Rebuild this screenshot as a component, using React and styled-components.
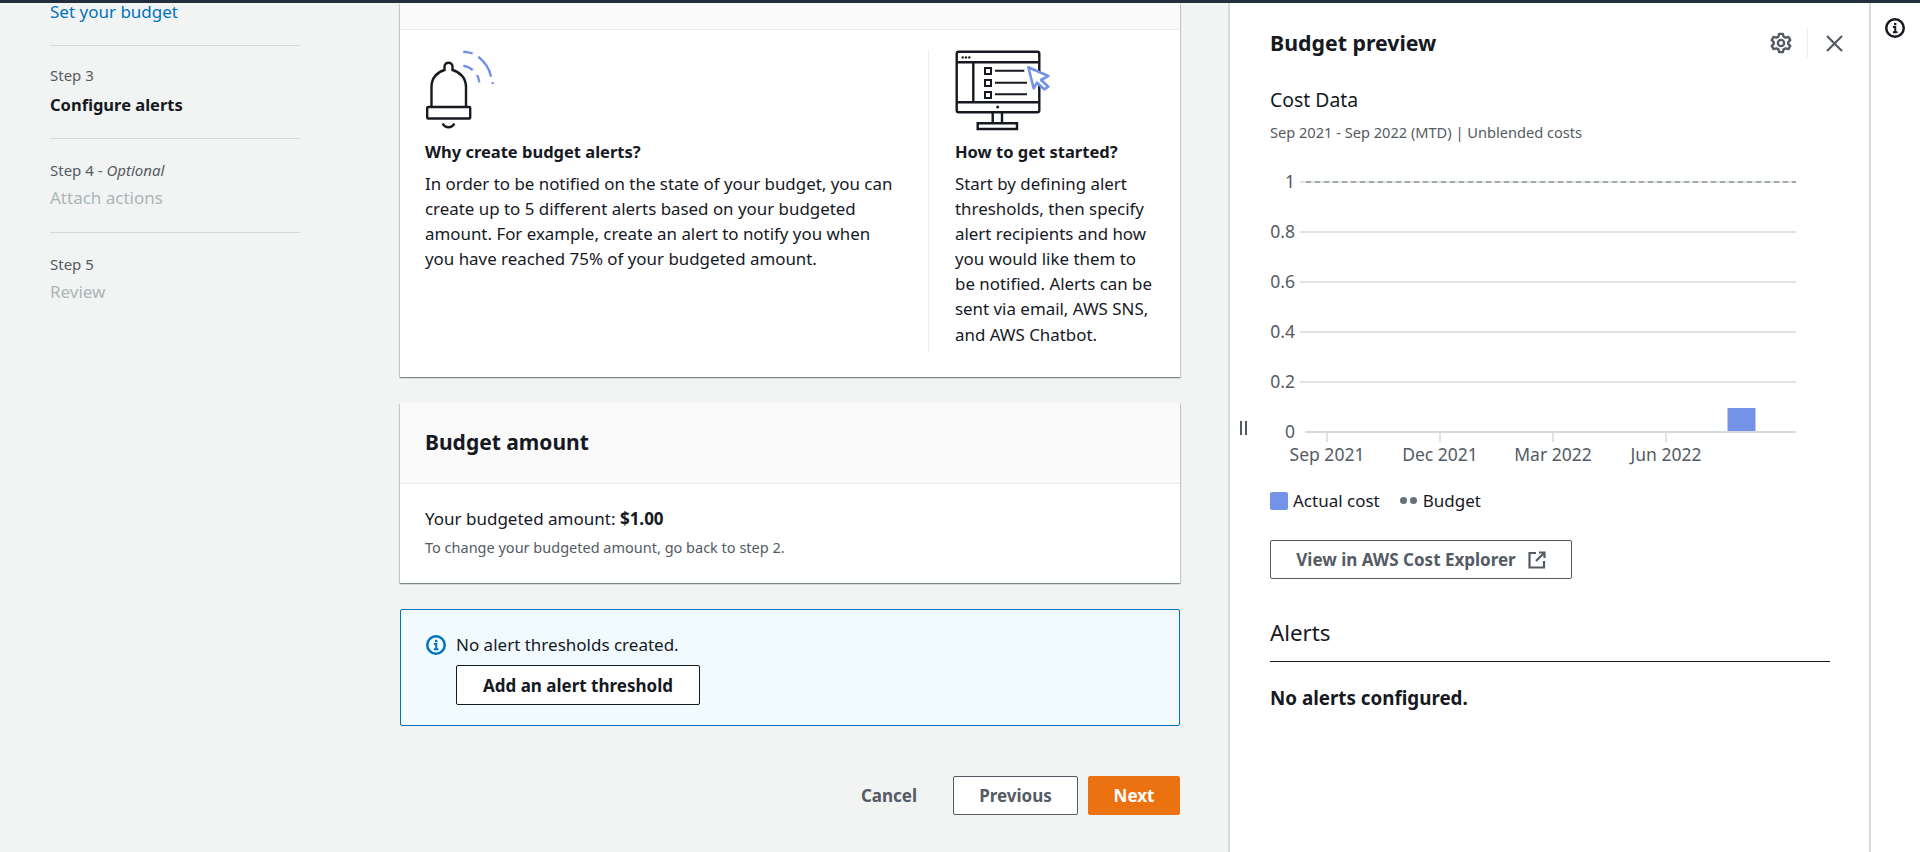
import React from "react";
import styled, { createGlobalStyle } from "styled-components";

const GlobalStyle = createGlobalStyle`
  html, body {
    margin: 0;
    padding: 0;
    height: 100%;
    overflow: hidden;
  }
  body {
    font-family: "Noto Sans", "Open Sans", sans-serif;
    font-size: 17px;
    line-height: 25px;
    color: #16191f;
    background: #f2f3f3;
  }
  * { box-sizing: border-box; }
`;

const Page = styled.div`
  display: flex;
  flex-direction: column;
  height: 852px;
  overflow: hidden;
`;
const TopEdge = styled.div`
  height: 3px;
  flex: none;
  background: #232f3e;
`;
const Body = styled.div`
  flex: 1;
  display: flex;
  min-height: 0;
`;
const Content = styled.div`
  width: 1228px;
  flex: none;
  display: flex;
`;

const Steps = styled.nav`
  width: 250px;
  margin-left: 50px;
  flex: none;
`;
const Step = styled.div`
  height: ${(p) => p.$height || 94}px;
  padding-top: ${(p) => p.$top ?? 21}px;
  border-bottom: ${(p) => (p.$last ? "none" : "1px solid #d5dbdb")};
`;
const StepLabel = styled.div`
  font-size: 15px;
  line-height: 20px;
  color: #545b64;
  em { font-style: italic; }
`;
const StepName = styled.div`
  margin-top: ${(p) => (p.$active ? 7 : 5)}px;
  font-size: ${(p) => (p.$active ? 16.5 : 17)}px;
  line-height: 25px;
  font-weight: ${(p) => (p.$active ? 700 : 400)};
  color: ${(p) => (p.$active ? "#16191f" : "#aab7b8")};
`;
const StepLink = styled.a`
  display: block;
  font-size: 17px;
  line-height: 18px;
  color: #0073bb;
`;

const Main = styled.main`
  width: 780px;
  margin-left: 100px;
  flex: none;
  display: flex;
  flex-direction: column;
`;
const Card = styled.section`
  background: #fff;
  box-shadow: 0 1px 1px 0 rgba(0, 28, 36, 0.3), 1px 1px 1px 0 rgba(0, 28, 36, 0.15),
    -1px 1px 1px 0 rgba(0, 28, 36, 0.15);
  margin-bottom: 26px;
`;
const CardStub = styled.div`
  height: 27px;
  background: #fafafa;
  border-bottom: 1px solid #eaeded;
`;
const IntroBody = styled.div`
  display: flex;
  height: 347px;
  padding: 20px 0 25px 25px;
`;
const IntroLeft = styled.div`
  width: 503px;
  flex: none;
`;
const IntroRight = styled.div`
  flex: 1;
  border-left: 1px solid #eaeded;
  padding-left: 26px;
`;
const Art = styled.svg`
  display: block;
`;
const IntroTitle = styled.div`
  font-weight: 700;
  font-size: 16.5px;
  line-height: 25px;
  margin-top: 5px;
`;
const IntroText = styled.p`
  margin: 7px 0 0;
  font-size: 16.9px;
  line-height: 25.1px;
  white-space: nowrap;
`;

const CardHeader = styled.header`
  height: 81px;
  padding: 0 0 2px 25px;
  display: flex;
  align-items: center;
  background: #fafafa;
  border-bottom: 1px solid #eaeded;
  font-size: 21px;
  font-weight: 700;
`;
const CardBody = styled.div`
  height: 99px;
  padding: 22px 25px 0;
  font-size: 17px;
  b { font-weight: 700; }
`;
const Hint = styled.div`
  font-size: 14.5px;
  line-height: 20px;
  margin-top: 6px;
  color: #545b64;
`;

const Flash = styled.div`
  height: 117px;
  background: #f1faff;
  border: 1px solid #0073bb;
  border-radius: 2px;
  padding: 25px 25px 0;
  display: flex;
  gap: 10px;
`;
const FlashIcon = styled.svg`
  flex: none;
`;
const FlashText = styled.div`
  font-size: 17px;
  line-height: 20px;
`;
const Button = styled.button`
  display: inline-flex;
  align-items: center;
  justify-content: center;
  gap: 12px;
  width: ${(p) => p.$width}px;
  height: ${(p) => p.$height || 39}px;
  padding: 0;
  border-radius: 2px;
  border: 1px solid ${(p) => p.$line || "#545b64"};
  background: ${(p) => p.$bg || "#fff"};
  color: ${(p) => p.$color || "#545b64"};
  font-family: inherit;
  font-size: 17px;
  font-weight: 700;
`;
const AddButton = styled(Button)`
  display: flex;
  margin-top: 10px;
  background: #fff;
  border-color: #16191f;
  color: #16191f;
`;
const Actions = styled.div`
  display: flex;
  justify-content: flex-end;
  align-items: center;
  margin-top: 50px;
  gap: 10px;
`;
const CancelButton = styled(Button)`
  border: none;
  background: transparent;
  margin-right: 19px;
`;

const Preview = styled.aside`
  position: relative;
  width: 643px;
  flex: none;
  background: #fff;
  border-left: 2px solid #d5dbdb;
  border-right: 2px solid #d5dbdb;
  padding: 25px 40px 0 40px;
`;
const PreviewHead = styled.div`
  display: flex;
  align-items: center;
  justify-content: space-between;
  height: 30px;
  margin-right: -14px;
`;
const PreviewTitle = styled.h2`
  margin: 0;
  font-size: 21.3px;
  font-weight: 700;
  line-height: 30px;
`;
const PreviewTools = styled.div`
  display: flex;
  align-items: center;
`;
const ToolSep = styled.div`
  width: 1px;
  height: 30px;
  background: #eaeded;
  margin: 0 18px 0 15px;
`;
const ChartTitle = styled.div`
  margin-top: 29px;
  font-size: 19.4px;
  line-height: 25px;
`;
const ChartSub = styled.div`
  margin-top: 10px;
  font-size: 14.6px;
  line-height: 20px;
  color: #545b64;
`;
const Chart = styled.svg`
  display: block;
  margin-top: 8px;
  text {
    font-family: "Noto Sans", "Open Sans", sans-serif;
    font-size: 17.5px;
    fill: #545b64;
  }
`;
const Legend = styled.div`
  display: flex;
  align-items: center;
  height: 25px;
  margin-top: 22px;
  font-size: 17px;
`;
const Swatch = styled.span`
  width: 18px;
  height: 18px;
  background: #7492e7;
  border-radius: 2px;
  margin-right: 5px;
`;
const Dots = styled.span`
  display: inline-flex;
  gap: 3px;
  margin: 0 6px 0 20px;
  i {
    width: 7px;
    height: 7px;
    border-radius: 50%;
    background: #687078;
  }
`;
const ExplorerButton = styled(Button)`
  margin-top: 27px;
`;
const AlertsHead = styled.h3`
  margin: 39px 0 0;
  padding-bottom: 13px;
  font-size: 22.3px;
  line-height: 30px;
  font-weight: 400;
  border-bottom: 1px solid #16191f;
  width: 560px;
`;
const NoAlerts = styled.div`
  margin-top: 24px;
  font-size: 18.8px;
  font-weight: 700;
`;
const Handle = styled.div`
  position: absolute;
  left: 10px;
  top: 418px;
  display: flex;
  gap: 3px;
  i {
    width: 2px;
    height: 14px;
    background: #545b64;
  }
`;
const Rail = styled.div`
  flex: 1;
  background: #fff;
  padding: 15px 0 0 14px;
`;

const InfoGlyph = ({ color }) => (
  <>
    <circle cx="8" cy="8" r="7" stroke={color} strokeWidth="2" />
    <path d="M6.3 7.2H8.2V11.2M6.3 11.4H10" stroke={color} strokeWidth="1.6" />
    <rect x="7.2" y="3.9" width="1.9" height="1.9" fill={color} />
  </>
);

export default function App() {
  const grid = [182, 232, 282, 332, 382];
  const yLabels = ["1", "0.8", "0.6", "0.4", "0.2"];
  const ticks = [
    { x: 57, label: "Sep 2021" },
    { x: 170, label: "Dec 2021" },
    { x: 283, label: "Mar 2022" },
    { x: 396, label: "Jun 2022" },
  ];
  return (
    <Page>
      <GlobalStyle />
      <TopEdge />
      <Body>
        <Content>
          <Steps>
            <Step $height={43} $top={0}>
              <StepLink>Set your budget</StepLink>
            </Step>
            <Step $height={93} $top={19}>
              <StepLabel>Step 3</StepLabel>
              <StepName $active>Configure alerts</StepName>
            </Step>
            <Step $height={94}>
              <StepLabel>
                Step 4 - <em>Optional</em>
              </StepLabel>
              <StepName>Attach actions</StepName>
            </Step>
            <Step $last>
              <StepLabel>Step 5</StepLabel>
              <StepName>Review</StepName>
            </Step>
          </Steps>
          <Main>
            <Card>
              <CardStub />
              <IntroBody>
                <IntroLeft>
                  <Art width="72" height="84" viewBox="0 0 72 84" fill="none">
                    <path
                      d="M6.5 57V37C6.5 28 12 22 19.5 20V16.5C19.5 11.5 27.5 11.5 27.5 16.5V20C35 22 41 28 41 37V57"
                      stroke="#16191f"
                      strokeWidth="2.4"
                    />
                    <rect x="2.2" y="57" width="43" height="11.5" rx="1" stroke="#16191f" strokeWidth="2.4" />
                    <path d="M17.7 73.5C20 78.5 27 78.5 29.3 73.5" stroke="#16191f" strokeWidth="2.4" />
                    <path d="M38.3 1.7C41.5 1.9 44.8 2.4 47.7 3.5M53.3 6.7C60 12 64.5 19 66 26.7" stroke="#7492e7" strokeWidth="2.4" />
                    <path d="M67.6 32.2V34" stroke="#7492e7" strokeWidth="2.4" />
                    <path d="M38.3 15.7C41.8 16.2 45 17.7 47.7 20M52 25C53.3 27.2 54 29.7 54.3 32.3" stroke="#7492e7" strokeWidth="2.4" />
                  </Art>
                  <IntroTitle>Why create budget alerts?</IntroTitle>
                  <IntroText>
                    In order to be notified on the state of your budget, you can
                    <br />
                    create up to 5 different alerts based on your budgeted
                    <br />
                    amount. For example, create an alert to notify you when
                    <br />
                    you have reached 75% of your budgeted amount.
                  </IntroText>
                </IntroLeft>
                <IntroRight>
                  <Art width="96" height="84" viewBox="0 0 96 84" fill="none">
                    <rect x="1.7" y="1.7" width="82.6" height="60.6" rx="2" stroke="#16191f" strokeWidth="2.4" />
                    <path d="M1.7 12.3H84M18.3 12.3V52.3M1.7 52.3H84" stroke="#16191f" strokeWidth="2.4" />
                    <circle cx="7.7" cy="7.4" r="1.2" fill="#16191f" />
                    <circle cx="11" cy="7.4" r="1.2" fill="#16191f" />
                    <circle cx="14.3" cy="7.4" r="1.2" fill="#16191f" />
                    <rect x="30" y="18" width="6" height="6" stroke="#16191f" strokeWidth="2" />
                    <rect x="30" y="30" width="6" height="6" stroke="#16191f" strokeWidth="2" />
                    <rect x="30" y="42" width="6" height="6" stroke="#16191f" strokeWidth="2" />
                    <path d="M40 20.7H69.3M40 32.7H72M40 44.3H72" stroke="#16191f" strokeWidth="2" />
                    <circle cx="42.7" cy="57" r="1.5" fill="#16191f" />
                    <path d="M37.7 62.3V73.3H47V62.3M22.7 73.3H62V79H22.7Z" stroke="#16191f" strokeWidth="2.4" />
                    <path
                      d="M73.3 17.3L93.3 26L86 30L93.3 36.7L89.3 39.3L82 32.7L78.7 38.3Z"
                      fill="#fff"
                      stroke="#7492e7"
                      strokeWidth="2.6"
                      strokeLinejoin="round"
                    />
                  </Art>
                  <IntroTitle>How to get started?</IntroTitle>
                  <IntroText>
                    Start by defining alert
                    <br />
                    thresholds, then specify
                    <br />
                    alert recipients and how
                    <br />
                    you would like them to
                    <br />
                    be notified. Alerts can be
                    <br />
                    sent via email, AWS SNS,
                    <br />
                    and AWS Chatbot.
                  </IntroText>
                </IntroRight>
              </IntroBody>
            </Card>
            <Card>
              <CardHeader>Budget amount</CardHeader>
              <CardBody>
                Your budgeted amount: <b>$1.00</b>
                <Hint>To change your budgeted amount, go back to step 2.</Hint>
              </CardBody>
            </Card>
            <Flash>
              <FlashIcon width="20" height="20" viewBox="0 0 16 16" fill="none">
                <InfoGlyph color="#0073bb" />
              </FlashIcon>
              <FlashText>
                No alert thresholds created.
                <AddButton $width={244} $height={40}>
                  Add an alert threshold
                </AddButton>
              </FlashText>
            </Flash>
            <Actions>
              <CancelButton $width={70}>Cancel</CancelButton>
              <Button $width={125}>Previous</Button>
              <Button $width={92} $bg="#ec7211" $line="#ec7211" $color="#fff">
                Next
              </Button>
            </Actions>
          </Main>
        </Content>
        <Preview>
          <Handle>
            <i />
            <i />
          </Handle>
          <PreviewHead>
            <PreviewTitle>Budget preview</PreviewTitle>
            <PreviewTools>
              <svg width="22" height="22" viewBox="0 0 24 24" fill="none" stroke="#545b64" strokeWidth="2.6" strokeLinejoin="round">
                <path d="M10 2h4l.8 3 2.3 1.2 3-.8 2 3.4-2.2 2.2v2l2.2 2.2-2 3.4-3-.8L14.8 19l-.8 3h-4l-.8-3-2.3-1.2-3 .8-2-3.4 2.2-2.2v-2L1.9 8.8l2-3.4 3 .8L9.2 5z" />
                <circle cx="12" cy="12" r="3.4" />
              </svg>
              <ToolSep />
              <svg width="17" height="17" viewBox="0 0 17 17" fill="none" stroke="#545b64" strokeWidth="2.2">
                <path d="M1 1l15 15M16 1L1 16" />
              </svg>
            </PreviewTools>
          </PreviewHead>
          <ChartTitle>Cost Data</ChartTitle>
          <ChartSub>Sep 2021 - Sep 2022 (MTD) | Unblended costs</ChartSub>
          <Chart width="560" height="316" viewBox="0 150 560 316">
            {grid.map((y, i) => (
              <g key={y}>
                <line x1="30" x2="526" y1={y} y2={y} stroke="#d5dbdb" strokeWidth="1.5" />
                <text x="25" y={y + 6} textAnchor="end">
                  {yLabels[i]}
                </text>
              </g>
            ))}
            <line x1="36" x2="526" y1="182" y2="182" stroke="#687078" strokeWidth="1.2" strokeDasharray="5 4" />
            <line x1="35" x2="526" y1="432" y2="432" stroke="#d5dbdb" strokeWidth="2" />
            <text x="25" y="438" textAnchor="end">
              0
            </text>
            {ticks.map((t) => (
              <g key={t.x}>
                <line x1={t.x} x2={t.x} y1="432" y2="442" stroke="#d5dbdb" strokeWidth="1.5" />
                <text x={t.x} y="461" textAnchor="middle">
                  {t.label}
                </text>
              </g>
            ))}
            <rect x="457.5" y="408" width="28" height="23" fill="#7492e7" />
          </Chart>
          <Legend>
            <Swatch />
            Actual cost
            <Dots>
              <i />
              <i />
            </Dots>
            Budget
          </Legend>
          <ExplorerButton $width={302}>
            View in AWS Cost Explorer
            <svg width="18" height="18" viewBox="0 0 18 18" fill="none" stroke="#545b64" strokeWidth="2.2">
              <path d="M8 2H1.5V16.5H16V10M11 1.5H16.5V7M16.5 1.5L8 10" />
            </svg>
          </ExplorerButton>
          <AlertsHead>Alerts</AlertsHead>
          <NoAlerts>No alerts configured.</NoAlerts>
        </Preview>
        <Rail>
          <svg width="20" height="20" viewBox="0 0 16 16" fill="none">
            <InfoGlyph color="#16191f" />
          </svg>
        </Rail>
      </Body>
    </Page>
  );
}
